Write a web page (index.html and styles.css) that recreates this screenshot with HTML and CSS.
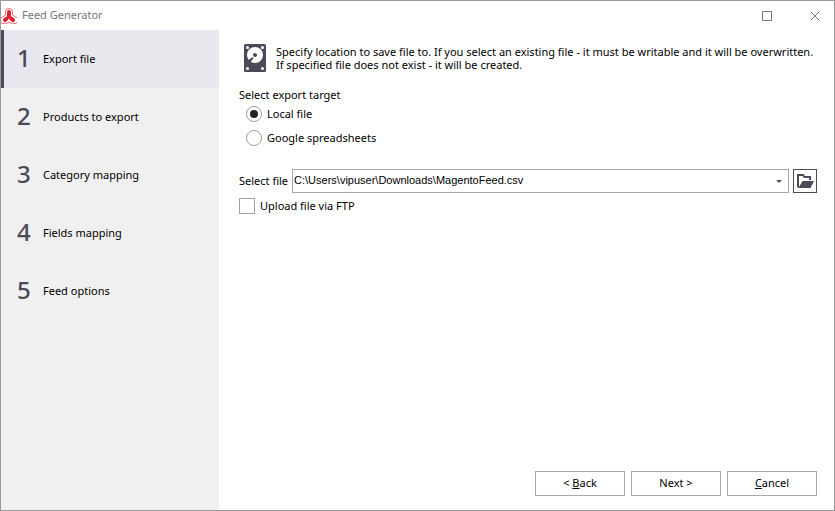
FILE: index.html
```html
<!DOCTYPE html>
<html lang="en">
  <head>
    <meta charset="UTF-8" />
    <meta name="viewport" content="width=device-width, initial-scale=1.0" />
    <title>Feed Generator</title>
    <link rel="stylesheet" href="styles.css">
  </head>
  <body>
    <div class="window">
      <header class="titlebar">
        <svg class="logo" width="16" height="16" viewBox="0 0 16 16" aria-hidden="true">
          <path class="logo-line" d="M4.500 3.500 A3.500 3 0 0 1 11.500 3.500 V7 L14.500 9 A3 3 0 0 1 12.500 15.300 H10 L8 14 L6 15.300 H3.500 A3 3 0 0 1 1.500 9 L4.500 7 Z" />
          <path class="logo-arm" d="M8 4 V7.500 M5.800 10.500 L4 12 M10.200 10.500 L12 12" />
          <path class="logo-arm thin" d="M8 8 L5 11 M8 8 L11 11" />
        </svg>
        <h1 class="title">Feed Generator</h1>
        <button class="window-button" type="button" aria-label="Maximize">
          <svg width="10" height="10" viewBox="0 0 10 10"><path d="M0.500 0.500 H9.500 V9.500 H0.500 Z" /></svg>
        </button>
        <button class="window-button" type="button" aria-label="Close">
          <svg width="10" height="10" viewBox="0 0 10 10"><path d="M0.500 0.500 L9.500 9.500 M9.500 0.500 L0.500 9.500" /></svg>
        </button>
      </header>

      <div class="content">
        <nav class="steps">
          <a class="step active" href="#export"><span class="number">1</span>Export file</a>
          <a class="step" href="#products"><span class="number">2</span>Products to export</a>
          <a class="step" href="#category"><span class="number">3</span>Category mapping</a>
          <a class="step" href="#fields"><span class="number">4</span>Fields mapping</a>
          <a class="step" href="#options"><span class="number">5</span>Feed options</a>
        </nav>

        <form class="page" id="export">
          <div class="intro">
            <svg class="disk" width="22" height="28" viewBox="0 0 22 28" aria-hidden="true">
              <rect class="dark" width="22" height="28" rx="1.500" />
              <circle class="light" cx="11" cy="11" r="8" />
              <circle class="dark" cx="11" cy="11" r="2" />
              <path class="dark" d="M8.500 13 L9.500 14 L6.500 18.500 L3.500 18.500 L4 16.500 Z" />
              <circle class="light" cx="3.500" cy="3.500" r="1.500" />
              <circle class="light" cx="18.500" cy="3.500" r="1.500" />
              <circle class="light" cx="3.500" cy="24.500" r="1.500" />
              <circle class="light" cx="18.500" cy="24.500" r="1.500" />
            </svg>
            <p>Specify location to save file to. If you select an existing file - it must be writable and it will be overwritten.<br />If specified file does not exist - it will be created.</p>
          </div>

          <fieldset class="target">
            <legend>Select export target</legend>
            <label class="choice"><input type="radio" name="target" checked />Local file</label>
            <label class="choice"><input type="radio" name="target" />Google spreadsheets</label>
          </fieldset>

          <div class="file-row">
            <label for="file">Select file</label>
            <select class="file" id="file">
              <option>C:\Users\vipuser\Downloads\MagentoFeed.csv</option>
            </select>
            <button class="browse" type="button" aria-label="Browse">
              <svg width="17" height="14" viewBox="0 0 17 14">
                <path class="folder-back" d="M2 13 L1 12.500 V1 H6 L7.500 3 H13 V6" />
                <path class="dark" d="M5.500 7 H17 L13.500 14 H1.500 Z" />
              </svg>
            </button>
          </div>

          <label class="choice"><input type="checkbox" />Upload file via FTP</label>

          <footer class="actions">
            <button class="button" type="button">&lt; <u>B</u>ack</button>
            <button class="button" type="button">Next &gt;</button>
            <button class="button" type="button"><u>C</u>ancel</button>
          </footer>
        </form>
      </div>
    </div>
  </body>
</html>
```

FILE: styles.css
```css
* {
  box-sizing: border-box;
}

body {
  margin: 0;
  font-family: "Noto Sans", "Open Sans", sans-serif;
  font-size: 11px;
  line-height: 13px;
  color: #000;
  background-color: #fff;
}

button,
input,
select {
  font: inherit;
  color: inherit;
  margin: 0;
}

svg {
  display: block;
}

.dark {
  fill: #4b4b57;
}

.light {
  fill: #fff;
}

.window {
  display: flex;
  flex-direction: column;
  min-height: 100vh;
  border: 1px solid #999;
}

/* Title bar */
.titlebar {
  display: flex;
  align-items: center;
  height: 29px;
}

.logo-line {
  fill: #fff;
  stroke: #ea6a70;
  stroke-width: 1;
}

.logo-arm {
  fill: none;
  stroke: #e01f2a;
  stroke-width: 4;
  stroke-linecap: round;
}

.logo-arm.thin {
  stroke-width: 2;
}

.title {
  flex: 1;
  margin: 0 0 0 5px;
  padding-bottom: 2px;
  font-size: 11px;
  font-weight: normal;
  line-height: 16px;
  color: #777;
}

.window-button {
  display: flex;
  align-items: center;
  justify-content: center;
  width: 48px;
  height: 28px;
  padding: 0;
  border: none;
  background: none;
}

.window-button:last-child {
  margin-right: -5px;
}

.window-button path {
  fill: none;
  stroke: #777;
}

.content {
  flex: 1;
  display: flex;
}

/* Wizard steps */
.steps {
  width: 218px;
  flex-shrink: 0;
  background-color: #f0f0f0;
}

.step {
  display: flex;
  align-items: center;
  height: 58px;
  padding: 0 0 2px 13px;
  border-left: 3px solid transparent;
  color: #000;
  text-decoration: none;
}

.step.active {
  background-color: #e9e8ef;
  border-left-color: #4b4b57;
}

.number {
  width: 26px;
  font-size: 24px;
  font-weight: 500;
  line-height: 32px;
  color: #4b4b57;
}

/* Current page */
.page {
  flex: 1;
  display: flex;
  flex-direction: column;
  padding: 14px 17px 14px 20px;
}

.intro {
  display: flex;
  gap: 10px;
  padding-left: 5px;
}

.disk {
  flex-shrink: 0;
}

.intro p {
  margin: 1px 0 0;
}

.target {
  margin: 16px 0 0;
  padding: 0 0 0 7px;
  border: none;
}

.target legend {
  margin-left: -7px;
  padding: 0;
}

.choice {
  display: flex;
  gap: 5px;
  height: 16px;
  line-height: 16px;
}

.target .choice {
  margin-top: 5px;
}

.target .choice + .choice {
  margin-top: 8px;
}

.choice input {
  appearance: none;
  width: 16px;
  height: 16px;
  border: 1px solid #a0a0a0;
  background-color: #fff;
}

.choice input[type="radio"] {
  display: grid;
  place-items: center;
  border-radius: 50%;
}

.choice input[type="radio"]:checked::before {
  content: "";
  width: 8px;
  height: 8px;
  border-radius: 50%;
  background-color: #222;
}

.file-row {
  display: flex;
  align-items: center;
  gap: 4px;
  margin: 23px 0 5px;
}

.file-row label {
  padding-bottom: 2px;
}

.file {
  appearance: none;
  flex: 1;
  min-width: 0;
  height: 24px;
  padding: 0 20px 2px 1px;
  border: 1px solid #a9a9a9;
  border-radius: 0;
  font-family: "Liberation Sans", sans-serif;
  background: #fff url("data:image/svg+xml,%3Csvg xmlns='http://www.w3.org/2000/svg' width='6' height='3'%3E%3Cpath d='M0 0h6L3 3z' fill='%23555'/%3E%3C/svg%3E") no-repeat right 6px center;
}

.browse {
  display: flex;
  align-items: center;
  justify-content: center;
  width: 24px;
  height: 24px;
  padding: 0;
  border: 1px solid #4b4b57;
  background-color: #fff;
}

.folder-back {
  fill: none;
  stroke: #4b4b57;
  stroke-width: 2;
}

.actions {
  display: flex;
  justify-content: flex-end;
  gap: 6px;
  margin-top: auto;
}

.button {
  width: 90px;
  height: 25px;
  padding: 0 0 2px;
  border: 1px solid #a9a9a9;
  background-color: #fff;
}
```
